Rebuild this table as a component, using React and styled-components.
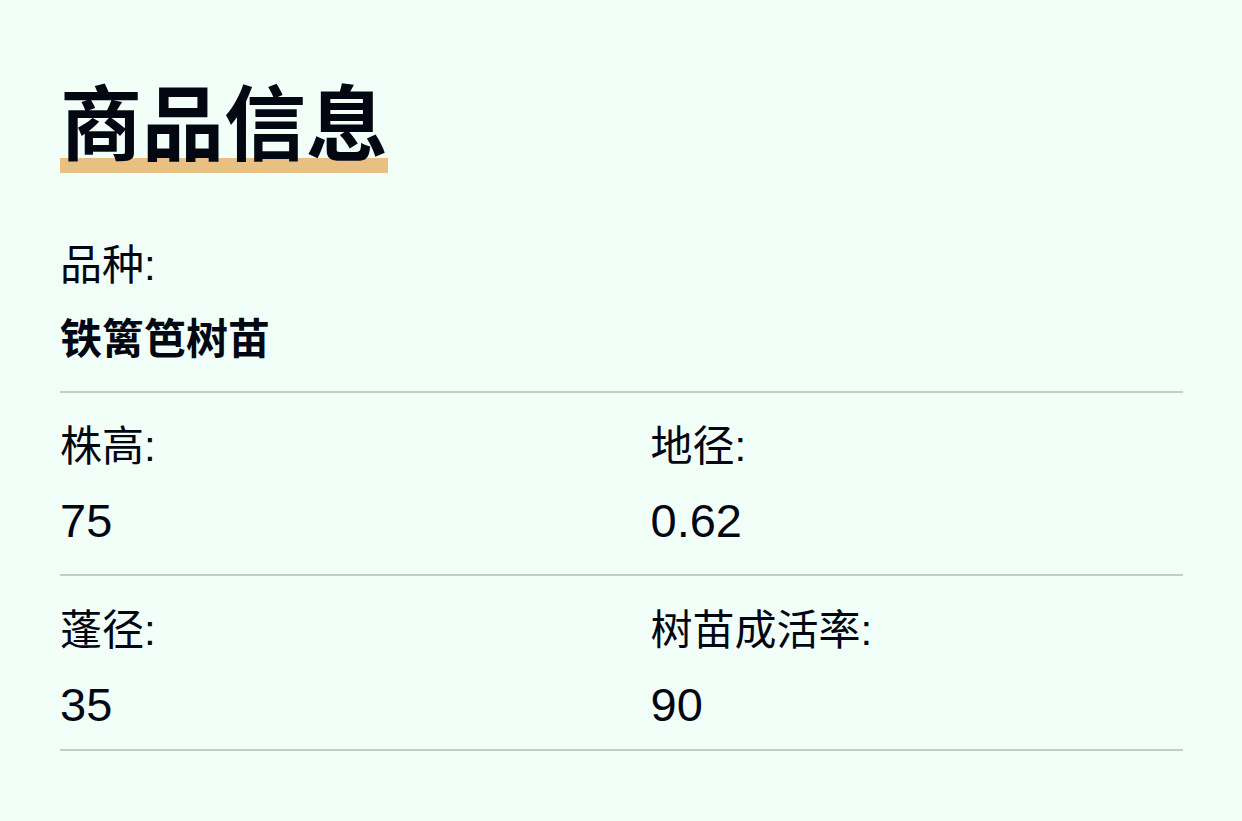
import React from 'react';
import styled, { createGlobalStyle } from 'styled-components';

const GlobalStyle = createGlobalStyle`
  html, body {
    margin: 0;
    padding: 0;
    background: #f2fff9;
  }
  body {
    font-family: "Liberation Sans", "Noto Sans CJK SC", sans-serif;
    color: #030712;
  }
`;

// product details
const rows = [
  { fields: [{ label: '品种:', value: '铁篱笆树苗', strong: true }], pt: 0, pb: 26 },
  {
    fields: [
      { label: '株高:', value: '75' },
      { label: '地径:', value: '0.62' },
    ],
    pt: 29,
    pb: 28,
  },
  {
    fields: [
      { label: '蓬径:', value: '35' },
      { label: '树苗成活率:', value: '90' },
    ],
    pt: 30,
    pb: 19,
  },
];

const App = () => {
  return (
    <Page>
      <GlobalStyle />
      <Title>商品信息</Title>
      <List>
        {rows.map((row, i) => (
          <Row key={i} $cols={row.fields.length} $pt={row.pt} $pb={row.pb}>
            {row.fields.map((f) => (
              <Field key={f.label}>
                <Label>{f.label}</Label>
                <Value $strong={f.strong}>{f.value}</Value>
              </Field>
            ))}
          </Row>
        ))}
      </List>
    </Page>
  );
};

const Page = styled.div`
  min-height: 821px;
  box-sizing: border-box;
  padding: 76px 59px 40px 60px;
  background: #f2fff9;
`;

const Title = styled.h1`
  margin: 0 0 65px;
  font-size: 82px;
  line-height: 100px;
  font-weight: 700;
  letter-spacing: 0;
  text-decoration: underline;
  text-decoration-color: #e9c084;
  text-decoration-thickness: 15px;
  text-underline-offset: 4px;
  text-decoration-skip-ink: auto;
`;

const List = styled.div`
  display: flex;
  flex-direction: column;
`;

const Row = styled.div`
  display: grid;
  grid-template-columns: ${(p) => (p.$cols > 1 ? '1fr 1fr' : '1fr')};
  column-gap: 58px;
  padding: ${(p) => p.$pt}px 0 ${(p) => p.$pb}px;
  border-bottom: 2px solid #c3cdc7;
`;

const Field = styled.div`
  display: flex;
  flex-direction: column;
  gap: 24px;
`;

const Label = styled.div`
  font-size: 42px;
  line-height: 50px;
  font-weight: 400;
`;

const Value = styled.div`
  font-size: ${(p) => (p.$strong ? '42px' : '47px')};
  line-height: 50px;
  font-weight: ${(p) => (p.$strong ? 700 : 400)};
`;

export default App;
